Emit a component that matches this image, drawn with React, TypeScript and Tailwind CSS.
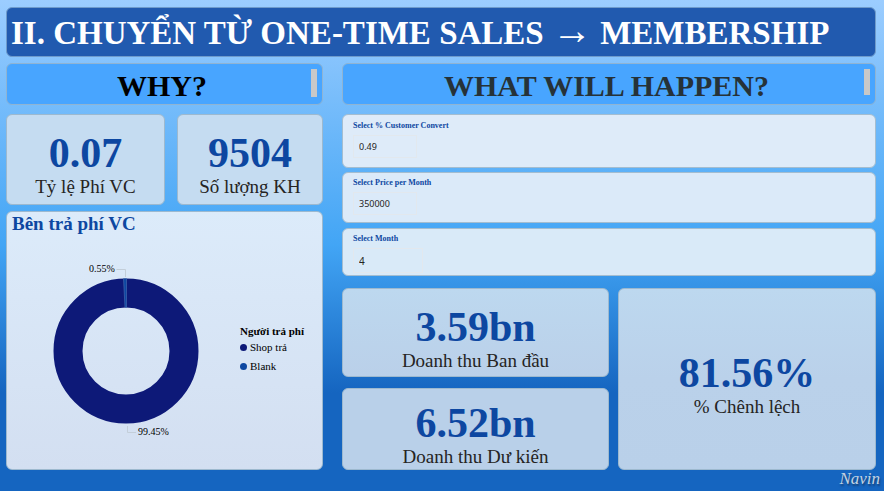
import { useState } from "react";

function SectionHeader({ title, textClass, thumbClass }: { title: string; textClass: string; thumbClass: string }) {
  return (
    <div className="relative flex h-[42px] items-center justify-center rounded-md border border-[#8fb4d3] bg-[#48a5ff] pt-1 pr-[5px]">
      <h2 className={`text-[30px] leading-8 font-bold ${textClass}`}>{title}</h2>
      <span className={`absolute top-[5px] right-[5px] w-[6px] bg-[#c8c8c8] ${thumbClass}`} />
    </div>
  );
}

function Kpi({ value, label, className }: { value: string; label: string; className: string }) {
  return (
    <section className={`flex flex-col items-center rounded-md border border-[#9db9cf] ${className}`}>
      <p className="text-[42px] leading-[46px] font-bold text-[#0d47a1]">{value}</p>
      <p className="text-[19px] leading-[22px] text-[#252423]">{label}</p>
    </section>
  );
}

type ParameterProps = { id: string; label: string; initial: string; className: string; inputClass: string };

function Parameter({ id, label, initial, className, inputClass }: ParameterProps) {
  const [value, setValue] = useState(initial);
  return (
    <section className={`flex flex-col items-start rounded-md border border-[#a4bdd0] pl-[10px] ${className}`}>
      <label htmlFor={id} className="text-[8px] leading-[10px] font-bold text-[#0d47a1]">
        {label}
      </label>
      <input
        id={id}
        value={value}
        onChange={(event) => setValue(event.target.value)}
        className={`border border-[#e2e8ee] bg-transparent pl-[5px] font-['Noto_Sans',sans-serif] text-[#252423] outline-none ${inputClass}`}
      />
    </section>
  );
}

function Donut() {
  return (
    <svg width="160" height="180" viewBox="0 0 160 180" role="img" aria-label="Bên trả phí VC" className="shrink-0 font-['Liberation_Serif',serif]">
      <circle cx="80" cy="90" r="58" fill="none" stroke="#0d1978" strokeWidth="29" />
      <path d="M77.5 17.5 L80.5 17.5 L80.5 46.5 L79 46.5 Z" fill="#0d47a1" stroke="#4b70b2" strokeWidth="0.6" />
      <path d="M70.5 8.500 H79.500 V16" fill="none" stroke="#c3ced9" />
      <path d="M81.500 165 V171.500 H90" fill="none" stroke="#c3ced9" />
      <text x="43" y="11" fontSize="10" fill="#000">0.55%</text>
      <text x="92" y="174" fontSize="10" fill="#000">99.45%</text>
    </svg>
  );
}

export default function App() {
  return (
    <main className="flex min-h-screen flex-col bg-[linear-gradient(to_bottom,#9ccdff_0%,#42a5f5_50%,#1565c0_80%,#1565c0_100%)] pt-[7px] pr-2 pl-[6px] font-['Liberation_Serif',serif]">
      <h1 className="rounded-md border border-[#6f9bcb] bg-[#215aaf] pt-[6px] pb-1 pl-1 text-[33px] leading-[38px] font-bold whitespace-nowrap text-white">
        II. CHUYỂN TỪ ONE-TIME SALES <span className="text-[40px] leading-[30px] font-normal">→</span> MEMBERSHIP
      </h1>

      <div className="mt-[6px] grid grid-cols-[317fr_534fr] gap-[19px]">
        <div className="flex flex-col">
          <SectionHeader title="WHY?" textClass="text-black" thumbClass="h-7" />
          <div className="mt-[9px] grid grid-cols-[159fr_146fr] gap-3">
            <Kpi value="0.07" label="Tỷ lệ Phí VC" className="h-[91px] bg-[#c5dcf1] pt-[15px]" />
            <Kpi value="9504" label="Số lượng KH" className="h-[91px] bg-[#c5dcf1] pt-[15px]" />
          </div>
          <section className="mt-[6px] flex grow flex-col rounded-md border border-[#9db9cf] bg-linear-to-b from-[#dcebfa] to-[#d3dff1] pl-[5px]">
            <h3 className="text-[19px] leading-6 font-bold text-[#0d47a1]">Bên trả phí VC</h3>
            <div className="flex items-center pt-[25px] pl-[34px]">
              <Donut />
              <div className="pb-[2px] pl-[34px] text-[11px] leading-[19px] text-black">
                <p className="leading-[13px] font-bold">Người trả phí</p>
                <ul>
                  <li className="flex items-center gap-[3px]">
                    <span className="h-[7px] w-[7px] rounded-full bg-[#0d1978]" />
                    Shop trả
                  </li>
                  <li className="flex items-center gap-[3px]">
                    <span className="h-[7px] w-[7px] rounded-full bg-[#0d47a1]" />
                    Blank
                  </li>
                </ul>
              </div>
            </div>
          </section>
        </div>

        <div className="flex flex-col">
          <SectionHeader title="WHAT WILL HAPPEN?" textClass="text-[#263238]" thumbClass="h-[26px]" />
          <Parameter
            id="convert"
            label="Select % Customer Convert"
            initial="0.49"
            className="mt-[9px] h-[54px] bg-[#deebf9] pt-[6px]"
            inputClass="mt-1 h-[23px] w-16 text-[9px]"
          />
          <Parameter
            id="price"
            label="Select Price per Month"
            initial="350000"
            className="mt-1 h-[51px] bg-[#dbeaf9] pt-[5px]"
            inputClass="mt-1 h-[23px] w-16 text-[9px]"
          />
          <Parameter
            id="month"
            label="Select Month"
            initial="4"
            className="mt-[5px] h-[48px] bg-[#d9eaf8] pt-[5px]"
            inputClass="mt-1 h-[25px] w-[70px] text-[10px]"
          />
          <div className="mt-3 grid grid-cols-[267fr_258fr] gap-[9px]">
            <div className="flex flex-col gap-[11px]">
              <Kpi value="3.59bn" label="Doanh thu Ban đầu" className="h-[89px] bg-linear-to-b from-[#bdd8ef] to-[#bad0e9] pt-[15px]" />
              <Kpi value="6.52bn" label="Doanh thu Dư kiến" className="h-[82px] bg-[#b9d0e9] pt-[11px]" />
            </div>
            <Kpi value="81.56%" label="% Chênh lệch" className="justify-center bg-linear-to-b from-[#bdd8ef] via-[#bad1ea] to-[#b9d0e9] pt-[10px]" />
          </div>
        </div>
      </div>
      <p className="-mr-1 self-end text-[17px] leading-[18px] text-[#c3d3e2] italic [text-shadow:1px_2px_2px_#173f70]">Navin</p>
    </main>
  );
}
